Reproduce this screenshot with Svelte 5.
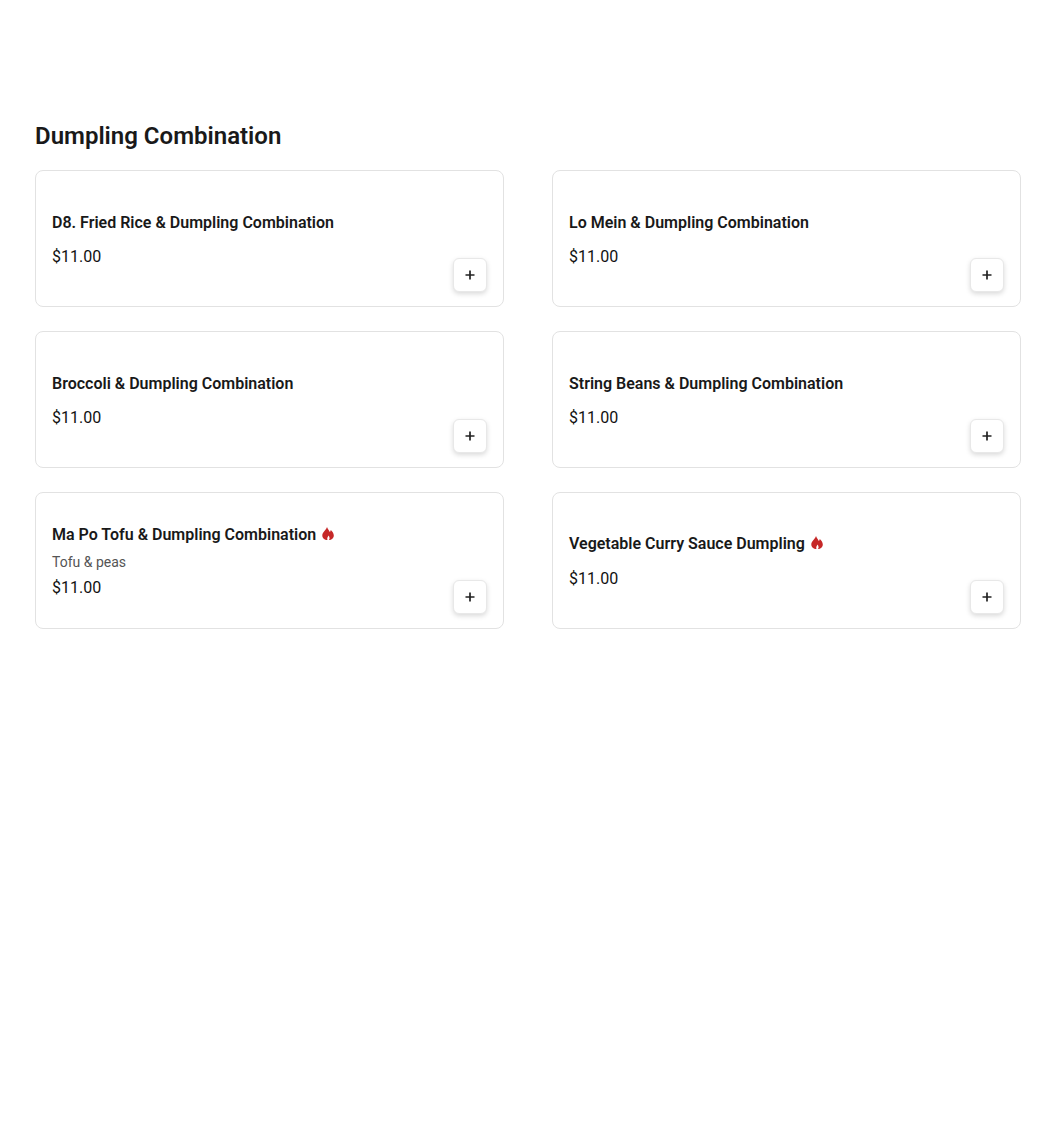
<script lang="ts">
	interface Dish {
		name: string;
		price: string;
		note?: string;
		spicy?: boolean;
	}

	const dishes: Dish[] = [
		{ name: 'D8. Fried Rice & Dumpling Combination', price: '$11.00' },
		{ name: 'Lo Mein & Dumpling Combination', price: '$11.00' },
		{ name: 'Broccoli & Dumpling Combination', price: '$11.00' },
		{ name: 'String Beans & Dumpling Combination', price: '$11.00' },
		{ name: 'Ma Po Tofu & Dumpling Combination', price: '$11.00', note: 'Tofu & peas', spicy: true },
		{ name: 'Vegetable Curry Sauce Dumpling', price: '$11.00', spicy: true }
	];
</script>

<main class="menu">
	<h2>Dumpling Combination</h2>
	<div class="grid">
		{#each dishes as dish}
			<article class="card" class:noted={dish.note} class:spicy={dish.spicy}>
				<h3>
					{dish.name}
					{#if dish.spicy}
						<svg class="flame" viewBox="0 0 12 13" aria-hidden="true">
							<path
								d="M5 0C5.500 2 7 3 7.800 5 8.300 4.500 8.600 4 8.800 3 10.500 4.500 11.800 6.500 11.800 8.500 11.800 11 9.700 13 6.900 13 7.800 12 8 10.500 6.600 8.500 5.500 10 4.800 11.500 5.500 13 2.500 13 .3 11 .3 8.500.3 5 4 3.500 5 0Z"
							/>
						</svg>
					{/if}
				</h3>
				{#if dish.note}
					<p class="note">{dish.note}</p>
				{/if}
				<p class="price">{dish.price}</p>
				<button type="button" class="add" aria-label="Add {dish.name}">
					<svg viewBox="0 0 12 12" aria-hidden="true">
						<path d="M6 1.500v9M1.500 6h9" />
					</svg>
				</button>
			</article>
		{/each}
	</div>
</main>

<style>
	:global(body) {
		background: #fff;
	}
	.menu {
		box-sizing: border-box;
		min-height: 1146px;
		padding: 121px 29px 0 35px;
		font-family: Roboto, 'Liberation Sans', sans-serif;
		color: #191919;
	}
	h2 {
		margin: 0 0 19px;
		font-size: 24px;
		line-height: 30px;
		font-weight: 600;
	}
	.grid {
		display: grid;
		grid-template-columns: 1fr 1fr;
		gap: 24px 48px;
	}
	.card {
		position: relative;
		box-sizing: border-box;
		height: 137px;
		padding: 18px 16px 16px;
		display: flex;
		flex-direction: column;
		justify-content: center;
		border: 1px solid #e2e2e2;
		border-radius: 8px;
		background: #fff;
	}
	h3 {
		margin: 0 0 10px;
		font-size: 16px;
		line-height: 24px;
		font-weight: 600;
	}
	.card.spicy h3 {
		margin-bottom: 11px;
	}
	.card.noted h3 {
		margin-bottom: 5px;
	}
	.flame {
		width: 12px;
		height: 13px;
		margin-left: 2px;
		vertical-align: 0;
		fill: #c62828;
	}
	.note {
		margin: 0 0 4px;
		font-size: 14px;
		line-height: 20px;
		color: #555;
	}
	.price {
		margin: 0;
		font-size: 16px;
		line-height: 24px;
		color: #111;
	}
	.add {
		position: absolute;
		right: 16px;
		bottom: 14px;
		width: 34px;
		height: 34px;
		padding: 0;
		display: flex;
		align-items: center;
		justify-content: center;
		border: 1px solid #e8e8e8;
		border-radius: 6px;
		background: #fff;
		box-shadow: 0 2px 5px rgba(0, 0, 0, 0.15);
		cursor: pointer;
	}
	.add svg {
		width: 12px;
		height: 12px;
		fill: none;
		stroke: #222;
		stroke-width: 1.7;
	}
</style>
